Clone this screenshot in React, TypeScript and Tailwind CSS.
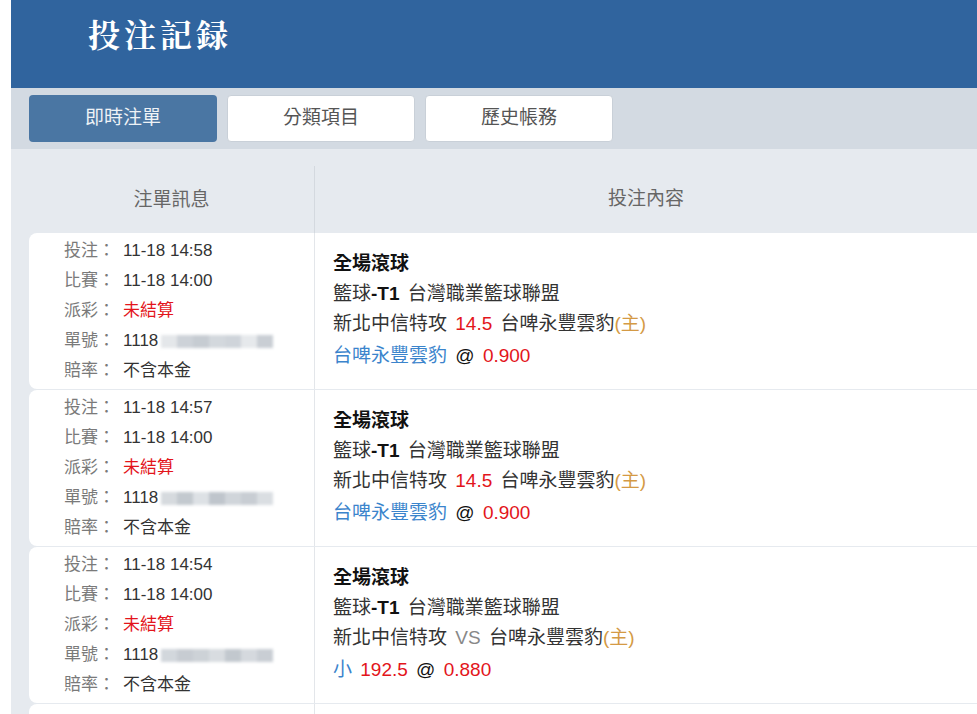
import type { ReactNode } from "react";

const FONT = "font-['Liberation_Sans','Noto_Sans_CJK_TC',sans-serif]";

type Bet = {
  placed: string;
  match: string;
  blur: string[];
  pick: ReactNode;
  line: ReactNode;
};

const bets: Bet[] = [
  {
    placed: "11-18 14:58",
    match: "11-18 14:00",
    blur: ["#e4e7ea", "#cdd2d8", "#c6ccd2", "#d3d8dd", "#cfd4da", "#e6e9ec", "#c9ced4"],
    line: <span className="text-[#e3151b]">14.5</span>,
    pick: (
      <>
        <span className="text-[#3b84cc]">台啤永豐雲豹</span> @{" "}
        <span className="text-[#e3151b]">0.900</span>
      </>
    ),
  },
  {
    placed: "11-18 14:57",
    match: "11-18 14:00",
    blur: ["#d6dade", "#c3c9cf", "#dde1e5", "#bfc5cc", "#d0d5da", "#c8cdd3", "#dadee2"],
    line: <span className="text-[#e3151b]">14.5</span>,
    pick: (
      <>
        <span className="text-[#3b84cc]">台啤永豐雲豹</span> @{" "}
        <span className="text-[#e3151b]">0.900</span>
      </>
    ),
  },
  {
    placed: "11-18 14:54",
    match: "11-18 14:00",
    blur: ["#d2d7dc", "#c7ccd2", "#cdd2d7", "#d8dce0", "#c2c8ce", "#d5d9de", "#c9ced4"],
    line: <span className="text-[#888]">VS</span>,
    pick: (
      <>
        <span className="text-[#3b84cc]">小</span>{" "}
        <span className="text-[#e3151b]">192.5</span> @{" "}
        <span className="text-[#e3151b]">0.880</span>
      </>
    ),
  },
];

const tabs = ["即時注單", "分類項目", "歷史帳務"];

function InfoRow({ label, children }: { label: string; children: ReactNode }) {
  return (
    <div className="flex h-[30px] items-center">
      <span className="w-[59px] text-[#7a7a7a]">{label}：</span>
      <span className="text-[#333]">{children}</span>
    </div>
  );
}

function BetRow({ bet }: { bet: Bet }) {
  return (
    <div className="flex h-[156px] bg-white rounded-l-lg">
      <div className="w-[285px] shrink-0 pl-[35px] pt-[3px] text-[17px]">
        <InfoRow label="投注">{bet.placed}</InfoRow>
        <InfoRow label="比賽">{bet.match}</InfoRow>
        <InfoRow label="派彩">
          <span className="text-[#e3151b]">未結算</span>
        </InfoRow>
        <InfoRow label="單號">
          <span className="flex items-center">
            1118
            <span className="ml-[3px] flex h-[13px] blur-[1.5px]">
              {bet.blur.map((c, i) => (
                <span key={i} className="h-full w-[16px]" style={{ backgroundColor: c }} />
              ))}
            </span>
          </span>
        </InfoRow>
        <InfoRow label="賠率">不含本金</InfoRow>
      </div>
      <div className="flex-1 border-l border-[#e3e6ea] pl-[18px] pt-[16px] text-[19px] text-[#333] [word-spacing:3px]">
        <div className="h-[30px] leading-[30px] font-bold text-[#111]">全場滾球</div>
        <div className="h-[30px] leading-[30px]">
          籃球<span className="font-bold text-[#111]">-T1</span> 台灣職業籃球聯盟
        </div>
        <div className="h-[30px] leading-[30px]">
          新北中信特攻 {bet.line} 台啤永豐雲豹<span className="text-[#d49a45]">(主)</span>
        </div>
        <div className="mt-[2px] h-[30px] leading-[30px] text-[#111]">{bet.pick}</div>
      </div>
    </div>
  );
}

export default function App() {
  return (
    <div className={`${FONT} w-[977px] h-[714px] overflow-hidden bg-white pl-[11px]`}>
      <header className="h-[88px] bg-[#30649e] pl-[77px] pt-[9px]">
        <h1 className="text-[32px] font-bold tracking-[4px] text-white font-['Noto_Serif_CJK_TC','Noto_Sans_CJK_TC',serif]">
          投注記録
        </h1>
      </header>

      <nav className="flex h-[61px] items-center gap-[10px] bg-[#d3dae2] pl-[18px]">
        {tabs.map((t, i) => (
          <button
            key={t}
            className={`h-[47px] w-[188px] rounded-[4px] text-[19px] ${
              i === 0 ? "bg-[#4a76a3] text-[#eef2f6]" : "border border-[#c9d0d8] bg-white text-[#555]"
            }`}
          >
            {t}
          </button>
        ))}
      </nav>

      <section className="bg-[#e6eaef] pl-[18px]">
        <div className="flex h-[84px] text-[19px] text-[#666]">
          <div className="flex w-[285px] items-center justify-center pt-[18px]">注單訊息</div>
          <div className="mt-[17px] flex flex-1 items-center justify-center border-l border-[#d4d9df]">
            投注內容
          </div>
        </div>
        <div className="flex flex-col gap-px">
          {bets.map((b, i) => (
            <BetRow key={i} bet={b} />
          ))}
          <div className="flex h-[156px] bg-white rounded-l-lg">
            <div className="w-[285px] shrink-0" />
            <div className="flex-1 border-l border-[#e3e6ea]" />
          </div>
        </div>
      </section>
    </div>
  );
}
